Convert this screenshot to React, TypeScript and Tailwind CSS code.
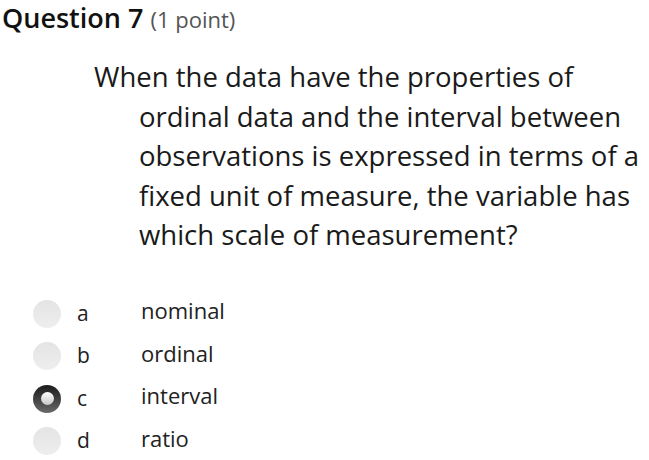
import React from 'react';

const options = [
    { letter: 'a', text: 'nominal', selected: false },
    { letter: 'b', text: 'ordinal', selected: false },
    { letter: 'c', text: 'interval', selected: true },
    { letter: 'd', text: 'ratio', selected: false },
];

const lines = [
    'When the data have the properties of',
    'ordinal data and the interval between',
    'observations is expressed in terms of a',
    'fixed unit of measure, the variable has',
    'which scale of measurement?',
];

function Radio({ selected }: { selected: boolean }) {
    if (selected) {
        return (
            <div className="w-[28px] h-[28px] rounded-full bg-gradient-to-b from-[#1c1c1c] to-[#6a6a6a] flex items-center justify-center">
                <div className="w-[13px] h-[13px] rounded-full bg-gradient-to-b from-[#ffffff] to-[#c8c8c8]" />
            </div>
        );
    }
    return <div className="w-[28px] h-[28px] rounded-full bg-gradient-to-b from-[#e4e4e4] to-[#eeeeee]" />;
}

export default function App() {
    return (
        <div className="w-[649px] h-[460px] bg-white text-[#111] font-['Open_Sans',sans-serif] overflow-hidden">
            <div className="h-[36px] pl-[2px] flex items-baseline gap-[7px] whitespace-nowrap">
                <span className="text-[27px] leading-[36px] font-semibold">Question 7</span>
                <span className="text-[22px] leading-[36px] text-[#555]">(1 point)</span>
            </div>

            <div className="mt-[21px] text-[27.5px] leading-[39.5px] text-[#1a1a1a] whitespace-nowrap">
                {lines.map((line, i) => (
                    <div key={i} className={i === 0 ? 'ml-[94px]' : 'ml-[139px]'}>{line}</div>
                ))}
            </div>

            <div className="mt-[45px] flex flex-col gap-[14.5px]">
                {options.map((opt) => (
                    <div key={opt.letter} className="flex items-center h-[28px]">
                        <div className="ml-[33px] w-[28px]">
                            <Radio selected={opt.selected} />
                        </div>
                        <span className="ml-[16px] w-[64px] text-[21px] text-[#222]">{opt.letter}</span>
                        <span className="text-[22px] text-[#222] -mt-[6px]">{opt.text}</span>
                    </div>
                ))}
            </div>
        </div>
    );
}
